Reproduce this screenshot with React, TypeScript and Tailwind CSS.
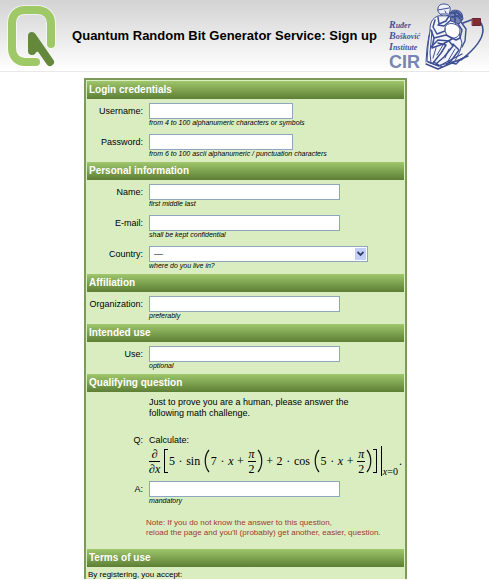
import type { ReactNode } from "react";

const sans = "font-['Liberation_Sans',Arial,sans-serif]";
const serif = "font-['Liberation_Serif','Times_New_Roman',serif]";
const fieldBox = "block h-4 border border-[#8ea6bf] bg-white px-1 text-[9px] leading-3 text-black outline-none";

function QLogo() {
  return (
    <svg viewBox="0 0 50 62" className="h-[62px] w-[50px] shrink-0" fill="none" strokeLinecap="round" role="img" aria-label="QRBG">
      <path d="M45 39V18C45 10 39 5 31 5H19C11 5 6 10 6 18V43C6 51 11 57 19 57H30" stroke="#fff" strokeOpacity=".6" strokeWidth="10" />
      <path d="M45 39V18C45 10 39 5 31 5H19C11 5 6 10 6 18V43C6 51 11 57 19 57H30" stroke="#9fc866" strokeWidth="8" />
      <path d="M26 46V31L44 57" stroke="#64893b" strokeWidth="8" strokeLinejoin="round" />
      <path d="M26 29L36 45L28 48Z" fill="#64893b" />
    </svg>
  );
}

function Statue() {
  return (
    <svg viewBox="0 0 64 70" className="h-[70px] w-16 shrink-0" fill="none" stroke="#3d4f92" strokeWidth="1" strokeLinecap="round" strokeLinejoin="round" aria-hidden="true">
      <path d="M13 10C12 5 15 3 19 3C24 3 26 6 25 10L24 14L19 16L15 13Z" fill="#edf0f8" />
      <path d="M13 9L24 7M20 10L21 12M16 13L23 13" />
      <path d="M13 15C7 17 5 22 5 29L3 45L2 60L13 65L30 60L35 50L37 42L33 29L29 18L23 15Z" fill="#f3f5fb" />
      <path d="M25 12C26 8 35 8 37 13L38 18L34 23L26 20Z" fill="#7584b5" />
      <path d="M26 12L32 11L37 16M27 16L33 15L36 19M30 20L30 13" strokeWidth="1.800" />
      <path d="M10 19L8 26L12 33L20 30L27 24M13 16L14 23L21 20L24 15M13 24L19 25L26 19" strokeWidth="1.500" />
      <path d="M20 28C19 20 34 21 35 29C35 35 31 38 26 37C22 35 20 32 20 28Z" fill="#fff" />
      <path d="M36 21L41 28L40 40L37 46M33 23L37 29L35 37" strokeWidth="1.400" />
      <path d="M6 29L9 37L21 34L31 39L35 37M9 37L7 47L18 43L27 38" strokeWidth="1.600" />
      <path d="M6 46L13 39L24 40L28 45L19 56L12 62M13 42L21 44L16 52L8 62M28 43L34 49L26 60L21 64" strokeWidth="1.500" />
      <path d="M4 34L2 47L1 61M7 30L5 52L6 62M11 47L8 57M18 44L12 54M30 48L23 60M24 48L20 57" />
      <path d="M1 63L13 68L43 55M3 61L14 65L37 53M9 61L17 66M23 61L31 63L36 58" strokeWidth="1.400" />
      <path d="M38 22L46 19" strokeWidth="1.800" />
      <path d="M56 22C63 34 50 48 36 59" strokeWidth="1.600" />
      <rect x="47.500" y="17.500" width="8" height="7" fill="#842b31" stroke="#652730" />
    </svg>
  );
}

function Bar({ children }: { children: ReactNode }) {
  return (
    <h2 className="flex h-[18px] items-center bg-linear-to-b from-[#9fc76c] to-[#5d7f35] px-[2px] text-[10px] leading-4 font-bold text-white">
      {children}
    </h2>
  );
}

function Field({ id, label, hint, children }: { id: string; label: string; hint: string; children: ReactNode }) {
  return (
    <div className="flex gap-[6px]">
      <label htmlFor={id} className="w-14 shrink-0 text-right text-[9px] leading-4 whitespace-nowrap">
        {label}
      </label>
      <div className="min-w-0 flex-1">
        {children}
        <p className="h-[10px] text-[7px] leading-[8px] italic whitespace-nowrap">{hint}</p>
      </div>
    </div>
  );
}

function Section({ title, children }: { title: string; children: ReactNode }) {
  return (
    <section>
      <Bar>{title}</Bar>
      <div className="flex flex-col gap-[5px] pt-1 pb-[2px]">{children}</div>
    </section>
  );
}

function Frac({ top, bottom }: { top: ReactNode; bottom: ReactNode }) {
  return (
    <span className="flex flex-col text-center leading-3">
      <span className="border-b border-black px-px pb-px">{top}</span>
      <span className="pt-px">{bottom}</span>
    </span>
  );
}

function Paren({ right = false }: { right?: boolean }) {
  return (
    <svg viewBox="0 0 6 24" className="h-6 w-[6px]" fill="none" stroke="#111" strokeWidth="1.200" aria-hidden="true">
      <path d={right ? "M1 1C6 7 6 17 1 23" : "M5 1C0 7 0 17 5 23"} />
    </svg>
  );
}

function Group({ children }: { children: ReactNode }) {
  return <span className="flex items-center gap-px">{children}</span>;
}

function Formula() {
  return (
    <div className={`flex h-[30px] w-[253px] items-center justify-between text-[12px] whitespace-nowrap ${serif}`}>
      <Frac top={<i>∂</i>} bottom={<i>∂x</i>} />
      <Group>
        <span className="h-6 w-1 border-y border-l border-black" />
        <span>5</span>
      </Group>
      <span>·</span>
      <span>sin</span>
      <Group>
        <Paren />
        <span>7</span>
      </Group>
      <span>·</span>
      <i>x</i>
      <span>+</span>
      <Group>
        <Frac top={<i>π</i>} bottom="2" />
        <Paren right />
      </Group>
      <span>+</span>
      <span>2</span>
      <span>·</span>
      <span>cos</span>
      <Group>
        <Paren />
        <span>5</span>
      </Group>
      <span>·</span>
      <i>x</i>
      <span>+</span>
      <Group>
        <Frac top={<i>π</i>} bottom="2" />
        <Paren right />
        <span className="h-6 w-1 border-y border-r border-black" />
      </Group>
      <Group>
        <span className="h-[30px] border-l border-black" />
        <span className="self-end text-[10px] leading-[8px]">
          <i>x</i>=0
        </span>
        <span>.</span>
      </Group>
    </div>
  );
}

export default function App() {
  return (
    <div className={`flex h-screen flex-col overflow-hidden bg-white pb-px text-black ${sans}`}>
      <header className="flex h-[72px] shrink-0 items-center border-b border-[#e8e8e8] bg-linear-to-b from-[#d3d3d3] to-white pl-[6px]">
        <QLogo />
        <h1 className="flex-1 pl-1 text-center text-[13px] font-bold whitespace-nowrap">
          Quantum Random Bit Generator Service: Sign up
        </h1>
        <div className="flex shrink-0">
          <div className="w-9 pt-[19px] text-[#445695]">
            <p className={`text-[8px] leading-[10px] font-bold italic ${serif}`}>
              <span className="text-[10px]">R</span>uđer
              <br />
              <span className="text-[10px]">B</span>ošković
              <br />
              <span className="text-[10px]">I</span>nstitute
            </p>
            <p className="text-[18px] leading-[18px] font-bold text-[#7885b0]">CIR</p>
          </div>
          <Statue />
        </div>
      </header>
      <main className="min-h-0 flex-1 overflow-hidden pt-[6px] pl-[2px]">
        <form className="mx-auto w-[323px] border-2 border-[#7c9b59] bg-[#daedc0] p-px" onSubmit={(e) => e.preventDefault()}>
          <Section title="Login credentials">
            <Field id="username" label="Username:" hint="from 4 to 100 alphanumeric characters or symbols">
              <input id="username" type="text" className={`w-36 ${fieldBox}`} />
            </Field>
            <Field id="password" label="Password:" hint="from 6 to 100 ascii alphanumeric / punctuation characters">
              <input id="password" type="password" className={`w-36 ${fieldBox}`} />
            </Field>
          </Section>
          <Section title="Personal information">
            <Field id="name" label="Name:" hint="first middle last">
              <input id="name" type="text" className={`w-[191px] ${fieldBox}`} />
            </Field>
            <Field id="email" label="E-mail:" hint="shall be kept confidential">
              <input id="email" type="email" className={`w-[191px] ${fieldBox}`} />
            </Field>
            <Field id="country" label="Country:" hint="where do you live in?">
              <div className="relative w-[219px]">
                <select id="country" className={`w-full appearance-none ${fieldBox}`}>
                  <option>—</option>
                </select>
                <span className="pointer-events-none absolute top-[2px] right-[2px] flex h-3 w-[11px] items-center justify-center bg-[#c2cff8]">
                  <svg viewBox="0 0 7 6" className="h-[6px] w-[7px]" fill="none" stroke="#35415f" strokeWidth="1.800" aria-hidden="true">
                    <path d="M.5 1L3.500 4L6.500 1" />
                  </svg>
                </span>
              </div>
            </Field>
          </Section>
          <Section title="Affiliation">
            <Field id="organization" label="Organization:" hint="preferably">
              <input id="organization" type="text" className={`w-[191px] ${fieldBox}`} />
            </Field>
          </Section>
          <Section title="Intended use">
            <Field id="use" label="Use:" hint="optional">
              <input id="use" type="text" className={`w-[191px] ${fieldBox}`} />
            </Field>
          </Section>
          <Section title="Qualifying question">
            <p className="pt-px pl-[62px] text-[9px] leading-[11px]">
              Just to prove you are a human, please answer the
              <br />
              following math challenge.
            </p>
            <div className="flex gap-[6px] pt-[10px] text-[9px] leading-3">
              <span className="w-14 shrink-0 text-right">Q:</span>
              <div>
                <p>Calculate:</p>
                <Formula />
              </div>
            </div>
            <Field id="answer" label="A:" hint="mandatory">
              <input id="answer" type="text" className={`w-[191px] ${fieldBox}`} />
            </Field>
            <p className="pt-[6px] pb-[9px] pl-[59px] text-[8px] leading-[10px] whitespace-nowrap text-[#a13a2e]">
              Note: If you do not know the answer to this question,
              <br />
              reload the page and you'll (probably) get another, easier, question.
            </p>
          </Section>
          <Section title="Terms of use">
            <p className="px-px text-[8px] leading-[8px]">By registering, you accept:</p>
          </Section>
        </form>
      </main>
    </div>
  );
}
